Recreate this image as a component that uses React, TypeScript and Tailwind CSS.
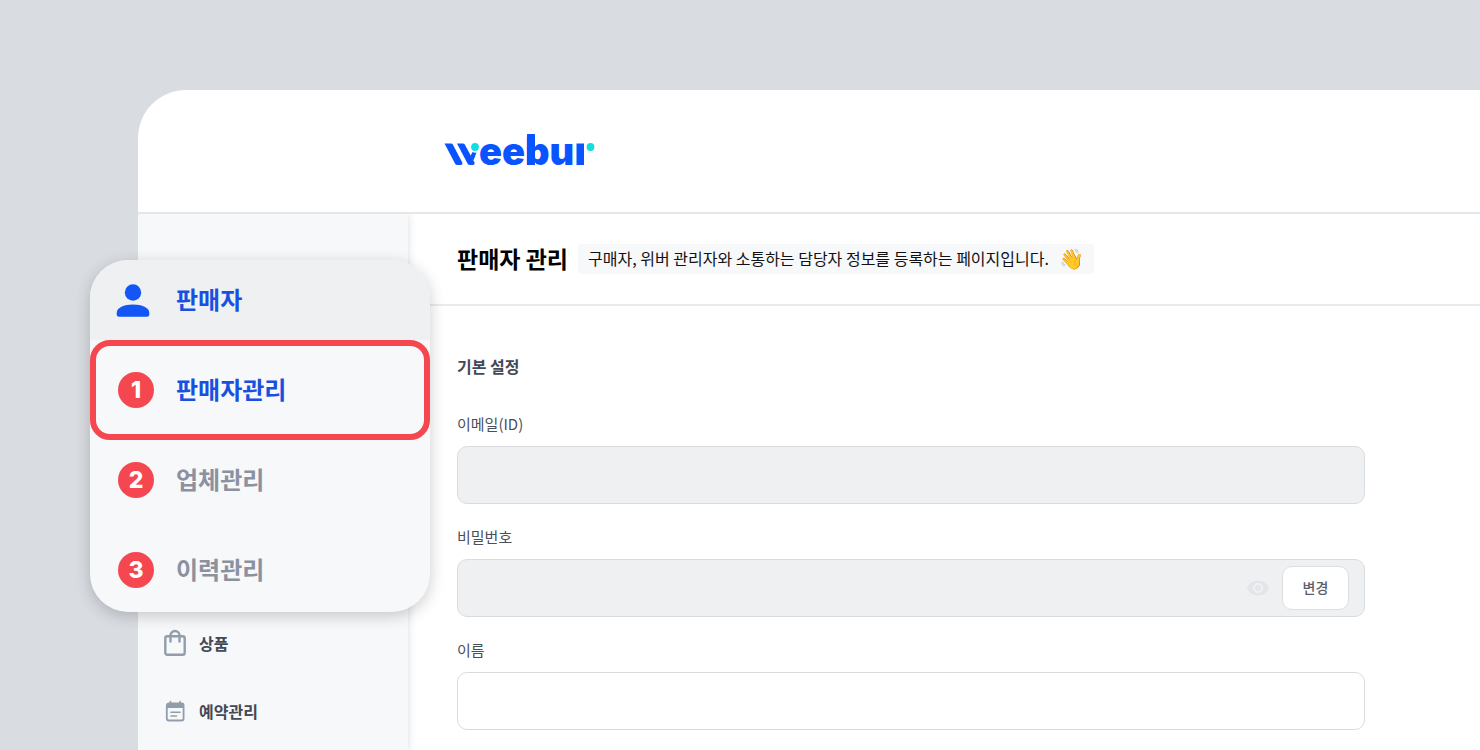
import { useId, type ReactNode } from 'react';
import { MdVisibility } from 'react-icons/md';

function Logo() {
  return (
    <svg viewBox="0 -10 152 56" className="h-14 w-[152px]" role="img" aria-label="weebur">
      <g fill="#0a54ff">
        <path d="M0.500 10.500H7Q8.200 10.500 8.800 11.500L18.300 29.500Q18.800 32 16.500 32H13.500Q11.800 32 11 30.500Z" />
        <path d="M13 10.500H19Q20.200 10.500 20.800 11.500L30.500 29.500Q30.800 32 28.500 32H26Q24.300 32 23.500 30.500Z" />
        <path d="M28.500 19Q30.500 20 32.500 19.500L29.500 27.500L26.500 23Z" />
        <rect x="132.500" y="10.500" width="7.500" height="21.500" />
        <rect x="83" y="1" width="8" height="31" rx="0.500" />
      </g>
      <circle cx="31" cy="14" r="3.900" fill="#11dede" />
      <circle cx="146.500" cy="14" r="3.900" fill="#11dede" />
      <text x="35" y="32" fill="#0a54ff" fontFamily="Inter" fontWeight="900" fontSize="38">
        eebu
      </text>
    </svg>
  );
}

function PersonIcon() {
  return (
    <svg viewBox="0 0 34 34" className="h-[34px] w-[34px]" fill="#1355f5" aria-hidden="true">
      <circle cx="17" cy="9.500" r="8.200" />
      <path d="M0.700 30C0.700 24.500 8 21.500 17 21.500S33.300 24.500 33.300 30V31.500Q33.300 33.800 31 33.800H3Q0.700 33.800 0.700 31.500Z" />
    </svg>
  );
}

function BagIcon() {
  return (
    <svg viewBox="0 0 24 28" className="h-7 w-6" fill="none" stroke="#929dac" strokeWidth="2.400" aria-hidden="true">
      <rect x="2.300" y="7.300" width="19.400" height="18.400" rx="2" />
      <path d="M7.500 12.500V6.500a4.500 4.500 0 0 1 9 0V12.500" strokeLinecap="round" />
    </svg>
  );
}

function CalendarIcon() {
  return (
    <svg viewBox="0 0 24 24" className="h-6 w-6" fill="none" stroke="#929dac" strokeWidth="1.800" aria-hidden="true">
      <rect x="3.800" y="4.500" width="16.800" height="17" rx="2" />
      <path d="M3.800 4.500h16.800v4.500H3.800z" fill="#929dac" stroke="none" />
      <path d="M7.500 2.500v3M17 2.500v3M8 13.200h9M8 17h5.500" strokeLinecap="round" strokeWidth="1.600" />
    </svg>
  );
}

function Field({ label, type, disabled, children }: { label: string; type: string; disabled?: boolean; children?: ReactNode }) {
  const id = useId();
  return (
    <div className="mb-[21px]">
      <label htmlFor={id} className="mb-2.5 block text-[15px] leading-6 text-[#4a4f5b]">
        {label}
      </label>
      <div className="relative">
        <input
          id={id}
          type={type}
          disabled={disabled}
          className="block h-[58px] w-full rounded-[10px] border border-[#d9dcdf] bg-white px-4 text-base outline-none focus:border-[#1355f5] disabled:bg-[#eff0f2]"
        />
        {children}
      </div>
    </div>
  );
}

const steps = [
  { n: 1, label: '판매자관리', active: true },
  { n: 2, label: '업체관리', active: false },
  { n: 3, label: '이력관리', active: false },
];

function SellerMenu() {
  return (
    <nav
      aria-label="판매자"
      className="absolute top-[260px] left-[90px] w-[340px] overflow-hidden rounded-[38px] bg-[#f6f8fa] shadow-[0_4px_16px_rgba(0,0,0,0.2)]"
    >
      <a href="#seller" className="flex h-20 items-center bg-[#eef0f2] pl-[26px] text-2xl font-bold text-[#1a50e0]">
        <span className="w-[60px]">
          <PersonIcon />
        </span>
        <span className="pb-0.5">판매자</span>
      </a>
      <ul className="flex flex-col gap-2.5 pb-[2px]">
        {steps.map((s) => (
          <li key={s.n} className={s.active ? '-mb-2.5 rounded-[20px] border-[6px] border-[#f44750]' : ''}>
            <a
              href={`#step-${s.n}`}
              className={
                s.active
                  ? 'flex h-[88px] items-center gap-[22px] pl-[22px] text-2xl font-bold text-[#1a50e0]'
                  : 'flex h-20 items-center gap-[22px] pl-7 text-2xl font-bold text-[#8b919e]'
              }
            >
              <span className="flex h-9 w-9 items-center justify-center rounded-full bg-[#f44750] font-[Inter] text-[23px] font-extrabold text-white">
                {s.n}
              </span>
              <span className="pb-0.5">{s.label}</span>
            </a>
          </li>
        ))}
      </ul>
    </nav>
  );
}

export default function App() {
  return (
    <div className="relative flex min-h-screen flex-col overflow-hidden bg-[#d9dce1] pt-[90px] pl-[138px] font-['Noto_Sans_CJK_KR',sans-serif]">
      <div className="flex grow flex-col overflow-hidden rounded-tl-[48px] bg-white">
        <header className="flex h-[124px] items-center border-b-2 border-[#e5e6e8] pl-[306px]">
          <a href="#home">
            <Logo />
          </a>
        </header>
        <div className="flex grow overflow-hidden">
          <aside className="w-[270px] shrink-0 bg-[#f6f8fa] pt-[415px] shadow-[0_0_8px_rgba(0,0,0,0.14)]">
            <ul className="flex flex-col gap-10 pl-[25px] text-base font-bold text-[#434956]">
              <li>
                <a href="#products" className="flex h-7 items-center gap-3">
                  <BagIcon />
                  상품
                </a>
              </li>
              <li>
                <a href="#bookings" className="flex h-7 items-center gap-3">
                  <CalendarIcon />
                  예약관리
                </a>
              </li>
            </ul>
          </aside>
          <main className="grow">
            <div className="flex h-[92px] items-center gap-2.5 border-b-2 border-[#eaebed] pl-[49px]">
              <h1 className="pb-0.5 text-[23px] leading-8 font-bold text-black">판매자 관리</h1>
              <p className="flex h-[30px] items-center gap-2.5 rounded bg-[#f6f8fa] px-2.5 pb-0.5 text-base text-[#111]">
                구매자, 위버 관리자와 소통하는 담당자 정보를 등록하는 페이지입니다. <span className="text-xl">👋</span>
              </p>
            </div>
            <form className="pt-12 pr-[115px] pl-[49px]">
              <h2 className="mb-[34px] text-base leading-6 font-bold text-[#434956]">기본 설정</h2>
              <Field label="이메일(ID)" type="email" disabled />
              <Field label="비밀번호" type="password" disabled>
                <div className="absolute inset-y-0 right-4 flex items-center gap-3">
                  <MdVisibility className="h-6 w-6 text-[#e2e6e9]" aria-hidden="true" />
                  <button type="button" className="h-[44px] w-[67px] rounded-[10px] border border-[#dcdfe2] bg-white pb-0.5 text-sm font-medium text-[#5b606c]">
                    변경
                  </button>
                </div>
              </Field>
              <Field label="이름" type="text" />
            </form>
          </main>
        </div>
      </div>
      <SellerMenu />
    </div>
  );
}
